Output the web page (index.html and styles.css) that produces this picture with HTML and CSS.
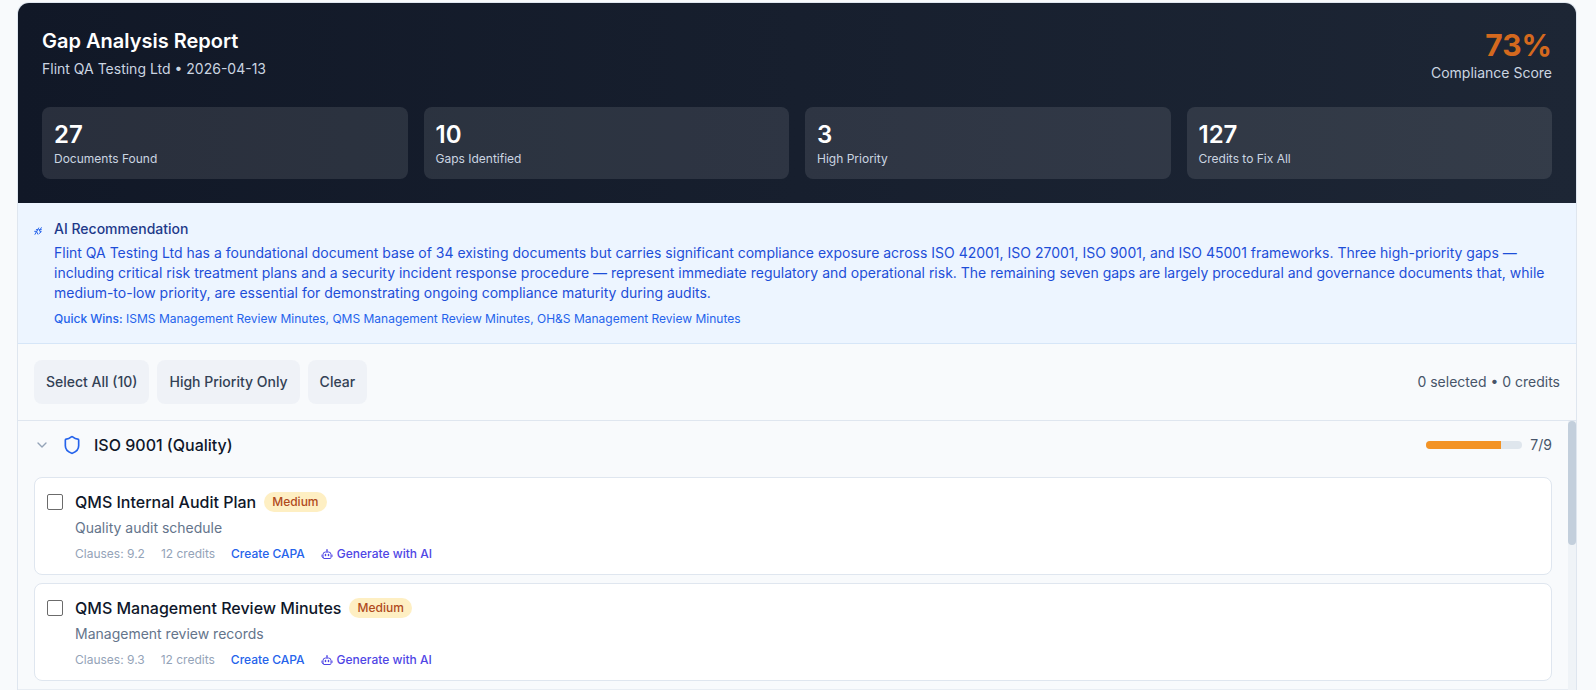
FILE: index.html
```html
<!DOCTYPE html>
<html lang="en">
<head>
    <meta charset="UTF-8">
    <meta name="viewport" content="width=device-width, initial-scale=1.0">
    <title>Gap Analysis Report</title>
    <link rel="stylesheet" href="styles.css">
</head>
<body>
    <svg class="sprite" aria-hidden="true">
        <symbol id="icon-robot" viewBox="0 0 24 24">
            <path d="M12 8V4M11 4h2"/>
            <path d="M4 19v-6a5 5 0 0 1 5-5h6a5 5 0 0 1 5 5v6a2 2 0 0 1-2 2H6a2 2 0 0 1-2-2z"/>
            <path d="M2 14v3M22 14v3"/>
            <path class="eyes" d="M9 13v2M15 13v2"/>
        </symbol>
    </svg>

    <main class="report">
        <header class="report-header">
            <div class="title-row">
                <div>
                    <h1>Gap Analysis Report</h1>
                    <p class="subtitle">Flint QA Testing Ltd • 2026-04-13</p>
                </div>
                <div class="score">
                    <div class="score-value">73%</div>
                    <div class="score-label">Compliance Score</div>
                </div>
            </div>
            <div class="stats">
                <div class="stat">
                    <div class="stat-value">27</div>
                    <div class="stat-label">Documents Found</div>
                </div>
                <div class="stat">
                    <div class="stat-value">10</div>
                    <div class="stat-label">Gaps Identified</div>
                </div>
                <div class="stat">
                    <div class="stat-value">3</div>
                    <div class="stat-label">High Priority</div>
                </div>
                <div class="stat">
                    <div class="stat-value">127</div>
                    <div class="stat-label">Credits to Fix All</div>
                </div>
            </div>
        </header>

        <section class="recommendation">
            <svg class="icon icon-spark" viewBox="0 0 24 24" aria-hidden="true">
                <path d="M2 13h6L3 22"/>
                <path d="M14 3 8 14l3 7"/>
                <path d="M22 2 16 12l6 2-7 6"/>
                <path d="M7 8h5M16 8h6"/>
            </svg>
            <div>
                <h2>AI Recommendation</h2>
                <p class="summary">Flint QA Testing Ltd has a foundational document base of 34 existing documents but carries significant compliance exposure across ISO 42001, ISO 27001, ISO 9001, and ISO 45001 frameworks. Three high-priority gaps — including critical risk treatment plans and a security incident response procedure — represent immediate regulatory and operational risk. The remaining seven gaps are largely procedural and governance documents that, while medium-to-low priority, are essential for demonstrating ongoing compliance maturity during audits.</p>
                <p class="quick-wins"><strong>Quick Wins:</strong> ISMS Management Review Minutes, QMS Management Review Minutes, OH&amp;S Management Review Minutes</p>
            </div>
        </section>

        <div class="toolbar">
            <div class="toolbar-buttons">
                <button type="button">Select All (10)</button>
                <button type="button">High Priority Only</button>
                <button type="button">Clear</button>
            </div>
            <span class="selection">0 selected • 0 credits</span>
        </div>

        <div class="gap-list">
            <section class="standard">
                <button type="button" class="standard-header" aria-expanded="true">
                    <svg class="icon icon-chevron" viewBox="0 0 24 24" aria-hidden="true"><path d="m6 9 6 6 6-6"/></svg>
                    <svg class="icon icon-shield" viewBox="0 0 24 24" aria-hidden="true">
                        <path d="M20 13c0 5-3.5 7.5-7.66 8.95a1 1 0 0 1-.67-.01C7.5 20.5 4 18 4 13V6a1 1 0 0 1 1-1c2 0 4.5-1.2 6.24-2.72a1.17 1.17 0 0 1 1.52 0C14.51 3.81 17 5 19 5a1 1 0 0 1 1 1z"/>
                    </svg>
                    <span class="standard-name">ISO 9001 (Quality)</span>
                    <span class="progress"><span class="progress-fill" style="width: 78%"></span></span>
                    <span class="progress-count">7/9</span>
                </button>
                <div class="items">
                    <article class="item">
                        <input type="checkbox" id="audit-plan">
                        <div>
                            <div class="item-title">
                                <label for="audit-plan">QMS Internal Audit Plan</label>
                                <span class="badge">Medium</span>
                            </div>
                            <p class="item-text">Quality audit schedule</p>
                            <div class="item-meta">
                                <span>Clauses: 9.2</span>
                                <span>12 credits</span>
                                <a href="#" class="capa">Create CAPA</a>
                                <a href="#" class="generate"><svg class="icon icon-robot" aria-hidden="true"><use href="#icon-robot"/></svg>Generate with AI</a>
                            </div>
                        </div>
                    </article>
                    <article class="item">
                        <input type="checkbox" id="review-minutes">
                        <div>
                            <div class="item-title">
                                <label for="review-minutes">QMS Management Review Minutes</label>
                                <span class="badge">Medium</span>
                            </div>
                            <p class="item-text">Management review records</p>
                            <div class="item-meta">
                                <span>Clauses: 9.3</span>
                                <span>12 credits</span>
                                <a href="#" class="capa">Create CAPA</a>
                                <a href="#" class="generate"><svg class="icon icon-robot" aria-hidden="true"><use href="#icon-robot"/></svg>Generate with AI</a>
                            </div>
                        </div>
                    </article>
                </div>
            </section>
            <div class="scroll-track"><div class="scroll-thumb"></div></div>
        </div>
    </main>
</body>
</html>
```
FILE: styles.css
```css
* {
    box-sizing: border-box;
}

body {
    font-family: Inter, "Liberation Sans", sans-serif;
    font-size: 14px;
    line-height: 20px;
    margin: 0;
    padding: 2px 19px 0 17px;
    background-color: #f8fafc;
    color: #0f172a;
    height: 100vh;
    overflow: hidden;
}

h1, h2, p {
    margin: 0;
}

button {
    font: inherit;
    border: none;
    cursor: pointer;
}

a {
    text-decoration: none;
}

a:hover {
    text-decoration: underline;
}

.sprite {
    display: none;
}

.icon {
    fill: none;
    stroke: currentColor;
    stroke-width: 2;
    stroke-linecap: round;
    stroke-linejoin: round;
    flex-shrink: 0;
}

.report {
    display: flex;
    flex-direction: column;
    min-height: 100%;
    border: 1px solid #dfe6ef;
    border-bottom: none;
    border-radius: 12px 12px 0 0;
    overflow: hidden;
}

/* Header */
.report-header {
    padding: 24px;
    background: linear-gradient(to right, #111827, #1d2635);
    color: #fff;
}

.title-row {
    display: flex;
    justify-content: space-between;
    margin-bottom: 24px;
}

h1 {
    font-size: 20px;
    line-height: 28px;
    font-weight: 600;
}

.subtitle {
    margin-top: 4px;
    color: #cbd5e1;
}

.score {
    text-align: right;
}

.score-value {
    font-size: 30px;
    line-height: 36px;
    font-weight: 700;
    color: #d4691e;
}

.score-label {
    color: #cbd5e1;
}

.stats {
    display: grid;
    grid-template-columns: repeat(4, 1fr);
    gap: 16px;
}

.stat {
    padding: 12px;
    border-radius: 8px;
    background-color: rgba(255, 255, 255, 0.1);
}

.stat-value {
    font-size: 24px;
    line-height: 32px;
    font-weight: 600;
}

.stat-label {
    font-size: 12px;
    line-height: 16px;
    color: #cbd5e1;
}

/* AI recommendation */
.recommendation {
    display: flex;
    gap: 12px;
    padding: 16px;
    background-color: #edf5ff;
    border-bottom: 1px solid #d6e6f8;
}

.icon-spark {
    width: 8px;
    height: 20px;
    margin-top: 2px;
    color: #2563eb;
    stroke-width: 3;
}

h2 {
    font-size: 14px;
    line-height: 20px;
    font-weight: 500;
    color: #1e3a8a;
}

.summary {
    margin-top: 4px;
    color: #1d4ed8;
}

.quick-wins {
    margin-top: 8px;
    font-size: 12px;
    line-height: 16px;
    color: #2563eb;
}

.quick-wins strong {
    font-weight: 500;
}

/* Toolbar */
.toolbar {
    display: flex;
    justify-content: space-between;
    align-items: center;
    padding: 16px;
    border-bottom: 1px solid #dfe6ef;
}

.toolbar-buttons {
    display: flex;
    gap: 8px;
}

.toolbar button {
    padding: 12px;
    border-radius: 8px;
    background-color: #eff2f7;
    color: #334155;
    font-weight: 500;
}

.toolbar button:hover {
    background-color: #e2e8f0;
}

.selection {
    color: #475569;
}

/* Gap list */
.gap-list {
    display: flex;
    flex: 1;
}

.standard {
    flex: 1;
    border-bottom: 1px solid #e8edf3;
}

.standard-header {
    display: flex;
    align-items: center;
    width: 100%;
    padding: 12px 16px;
    background: none;
    color: inherit;
    text-align: left;
}

.icon-chevron {
    width: 16px;
    height: 16px;
    margin-right: 12px;
    color: #94a3b8;
}

.icon-shield {
    width: 20px;
    height: 20px;
    margin-right: 12px;
    color: #2563eb;
}

.standard-name {
    flex: 1;
    font-size: 16px;
    line-height: 24px;
    font-weight: 500;
}

.progress {
    width: 96px;
    height: 8px;
    margin-right: 8px;
    border-radius: 4px;
    background-color: #dfe6ed;
    overflow: hidden;
}

.progress-fill {
    display: block;
    height: 100%;
    background-color: #f39325;
}

.progress-count {
    color: #475569;
}

.items {
    display: flex;
    flex-direction: column;
    gap: 8px;
    padding: 8px 16px;
}

.item {
    display: flex;
    gap: 12px;
    padding: 12px;
    border: 1px solid #dfe6ef;
    border-radius: 8px;
    background-color: #fff;
}

.item input {
    appearance: none;
    width: 16px;
    height: 16px;
    margin: 4px 0 0;
    border: 1px solid #6b6b6b;
    border-radius: 2px;
    background-color: #fff;
    flex-shrink: 0;
}

.item input:checked {
    border-color: #2563eb;
    background-color: #2563eb;
}

.item-title {
    display: flex;
    align-items: center;
    gap: 8px;
    font-size: 16px;
    line-height: 24px;
    font-weight: 500;
}

.badge {
    padding: 2px 8px;
    border-radius: 10px;
    background-color: #feefc3;
    color: #b04a1c;
    font-size: 12px;
    line-height: 16px;
}

.item-text {
    margin-top: 4px;
    color: #64748b;
}

.item-meta {
    display: flex;
    gap: 16px;
    margin-top: 8px;
    font-size: 12px;
    line-height: 16px;
    color: #94a3b8;
}

.item-meta a {
    font-weight: 500;
}

.capa {
    color: #2563eb;
}

.generate {
    display: flex;
    align-items: center;
    gap: 4px;
    color: #4f46e5;
}

.icon-robot {
    width: 12px;
    height: 12px;
}

.eyes {
    stroke-width: 3;
}

.scroll-track {
    width: 8px;
    background-color: #eff3f7;
}

.scroll-thumb {
    height: 124px;
    border-radius: 4px;
    background-color: #c3cfdc;
}
```
